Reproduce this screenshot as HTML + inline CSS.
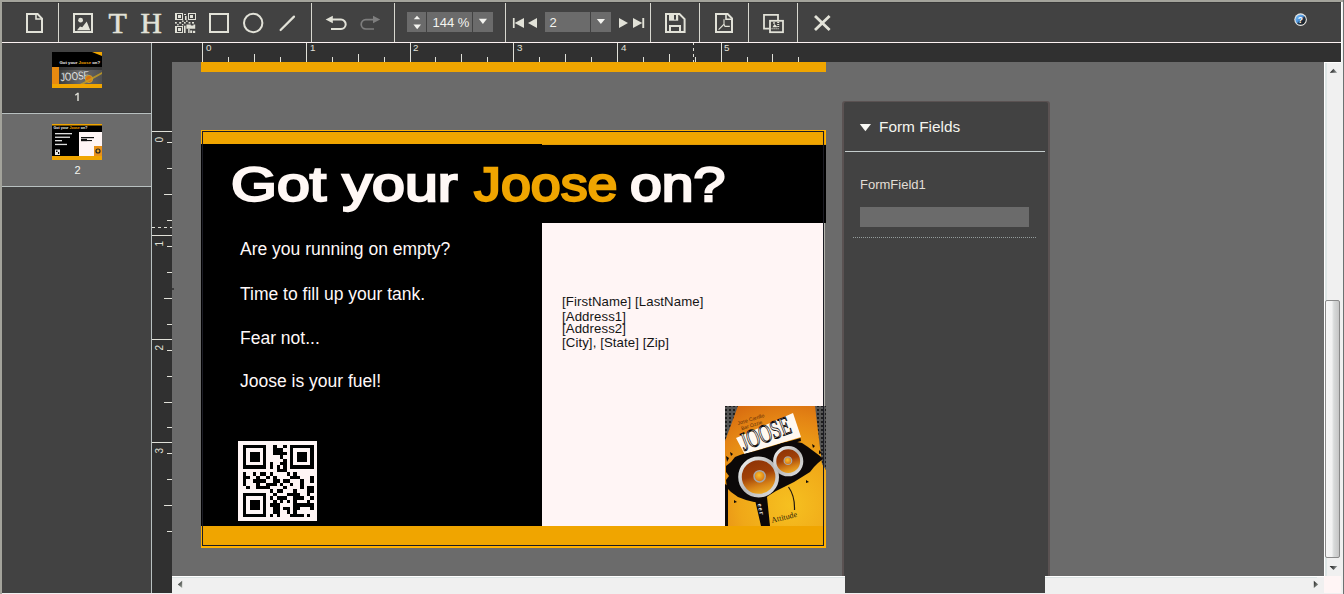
<!DOCTYPE html>
<html><head><meta charset="utf-8">
<style>
*{margin:0;padding:0;box-sizing:border-box}
html,body{width:1344px;height:594px;overflow:hidden;background:#a3a39b;font-family:"Liberation Sans",sans-serif}
.a{position:absolute}
#tb{left:2px;top:2px;width:1339px;height:41px;background:#424242;border-top:1px solid #383838}
.sep{position:absolute;top:3px;width:1px;height:39px;background:#d8d8d0}
.sepd{position:absolute;top:3px;width:1px;height:39px;background:#3a3a3a}
#hl{left:2px;top:42px;width:1339px;height:1px;background:#fcf2f2}
#side{left:2px;top:43px;width:149px;height:550px;background:#424242}
#sidel{left:151px;top:43px;width:1px;height:550px;background:#b8c0c0}
#rul{left:152px;top:43px;width:1189px;height:19px;background:#303030}
#vrul{left:152px;top:62px;width:20px;height:531px;background:#303030}
#canvas{left:172px;top:62px;width:1152px;height:514px;background:#6b6b6b}
#vsb{left:1324px;top:62px;width:19px;height:514px;background:#f0f0f0;border-left:1px solid #fff}
#hsb{left:172px;top:576px;width:1152px;height:18px;background:#f0f0f0;border-top:1px solid #fff}
#corner{left:1324px;top:576px;width:17px;height:17px;background:#fff5f5}
#rb{left:1343px;top:0;width:1px;height:594px;background:#6c7272}
#bot{left:2px;top:593px;width:1341px;height:1px;background:#f0f0f0}
.ico{position:absolute;overflow:visible}
</style></head><body>
<div id="tb" class="a"></div>
<div class="sep" style="left:58px"></div>
<div class="sep" style="left:311px"></div>
<div class="sep" style="left:394px"></div>
<div class="sep" style="left:505px"></div>
<div class="sep" style="left:650px"></div>
<div class="sep" style="left:699px"></div>
<div class="sep" style="left:748px"></div>
<div class="sep" style="left:797px"></div>
<div id="hl" class="a"></div>
<svg class="a" style="left:0;top:0" width="1344" height="43" viewBox="0 0 1344 43">
<g fill="none" stroke="#e2e2d8" stroke-width="2">
<path d="M27,14 H37.6 L42,18.6 V32 H27 Z"/>
<path d="M36,14 V19 H42" stroke-width="1.6"/>
<rect x="74" y="14" width="18" height="18"/>
<rect x="210" y="14" width="18" height="18"/>
<circle cx="253.2" cy="23" r="9.2"/>
<path d="M280.6,30 L294,16.6" stroke-width="2.2" stroke-linecap="round"/>
<path d="M332,19.6 H341 A4.7,4.7 0 0 1 341,29 H331"/>
<path d="M666,14 H679.5 L684.6,19.1 V32 H666 Z"/>
<path d="M670,33 V26 H680 V33"/>
<path d="M716,14 H727.6 L732,18.4 V32 H716 Z"/>
<path d="M726,14 V19.2 H732" stroke-width="1.6"/>
<path d="M769.5,28.6 H764 V14.8 H778 V20" stroke-width="1.8"/>
<rect x="770" y="20.8" width="13" height="11.4" stroke-width="1.8"/>
<path d="M815,16 L829.6,30 M829.6,16 L815,30" stroke-width="2.8"/>
</g>
<g fill="#e2e2d8">
<circle cx="80.6" cy="20.2" r="2.4"/>
<path d="M77,30.2 L80,26.4 L82.2,27.2 L86.7,21.6 L90.2,30.2 Z"/>
<text x="108.6" y="33" font-family="Liberation Serif" font-size="30" stroke="#e2e2d8" stroke-width="0.6">T</text>
<text x="140.6" y="33" font-family="Liberation Serif" font-size="29.5" stroke="#e2e2d8" stroke-width="0.6">H</text>
<path d="M325.6,19.6 L332.8,15.8 L332.8,23.2 Z"/>
<rect x="669" y="15" width="9.2" height="5.7"/>
</g>
<path d="M670,26.6 L670,26.6" />
<rect x="674" y="15" width="2" height="4.6" fill="#424242"/>
<g fill="none" stroke="#e2e2d8" stroke-width="1.1">
<path d="M718.6,29.6 L724,24.2 V19.2 M724,24.2 L725,26.4 H729.8"/>
<path d="M771.5,28.7 H779" stroke-dasharray="1.2,0.8"/>
</g>
<g fill="#e2e2d8">
<path d="M772.5,27.2 L774.5,24 L776,25.5 L777.5,27.2 Z"/>
<circle cx="774" cy="23" r="0.9"/>
<rect x="777.2" y="22" width="2" height="1"/>
<rect x="777.2" y="24" width="2" height="1"/>
<rect x="777.2" y="26" width="2" height="1"/>
</g>
<g fill="none" stroke="#7e7e7e" stroke-width="1.7">
<path d="M373,19.6 H365.8 A4.6,4.7 0 0 0 365.8,29 H374"/>
</g>
<path d="M380.2,19.6 L373,15.8 L373,23.2 Z" fill="#7e7e7e"/>
<!-- qr icon -->
<g fill="#e2e2d8">
<path fill-rule="evenodd" d="M175,13 h8 v7 h-8 Z M177,14 v5 h5 v-5 Z"/>
<rect x="178" y="15" width="3" height="3"/>
<path fill-rule="evenodd" d="M188,13 h8 v7 h-8 Z M189,14 v5 h6 v-5 Z"/>
<rect x="190" y="15" width="3" height="3"/>
<path fill-rule="evenodd" d="M175,26 h8 v7 h-8 Z M177,27 v5 h5 v-5 Z"/>
<rect x="178" y="28" width="3" height="3"/>
<rect x="184" y="14" width="2" height="1"/>
<rect x="185" y="16" width="1.6" height="4"/>
<rect x="182" y="20.5" width="1.6" height="1.4"/>
<rect x="186" y="20.5" width="1.6" height="1.4"/>
<rect x="175" y="22" width="1.8" height="1.6"/>
<rect x="179.2" y="22" width="2" height="1.6"/>
<rect x="184" y="22" width="1.6" height="1.6"/>
<rect x="188.6" y="22" width="1.8" height="1.6"/>
<rect x="192" y="22" width="2" height="1.6"/>
<rect x="177.2" y="24" width="1.4" height="1.4"/>
<rect x="182" y="24" width="1.4" height="1.4"/>
<path d="M186.4,24.4 H190.8 V25.6 H193.4 V24.4 H195.2 V28.8 H186.4 Z"/>
<rect x="184" y="25.7" width="1.6" height="7.3"/>
<rect x="188.2" y="28.8" width="1.4" height="4.2"/>
<rect x="190.2" y="30.4" width="2" height="2.6"/>
<rect x="193" y="30.8" width="2.2" height="2.2"/>
</g>
<!-- zoom control -->
<rect x="407" y="12" width="19" height="20" fill="#6b6b6b"/>
<rect x="427" y="12" width="45" height="20" fill="#6b6b6b"/>
<rect x="473" y="12" width="20" height="20" fill="#6b6b6b"/>
<g fill="#f4f4f0">
<path d="M413.8,19.2 L417,15.8 L420.2,19.2 Z"/>
<path d="M413.4,24.6 L421,24.6 L417.2,29.2 Z"/>
<path d="M478.8,18.8 L487,18.8 L482.9,24 Z"/>
</g>
<text x="432.5" y="27.2" font-size="13" fill="#f4f4f0">144 %</text>
<!-- page nav -->
<g fill="#e2e2d8">
<rect x="512.9" y="18" width="1.7" height="10"/>
<path d="M514.6,23 L524,18 L524,28 Z"/>
<path d="M528,23 L537,18 L537,28 Z"/>
<path d="M619,18 L628,23 L619,28 Z"/>
<path d="M633,18 L642.3,23 L633,28 Z"/>
<rect x="642.3" y="18" width="1.9" height="10"/>
</g>
<rect x="545" y="12" width="45" height="20" fill="#6b6b6b"/>
<rect x="591" y="12" width="20" height="20" fill="#6b6b6b"/>
<text x="549.6" y="27.3" font-size="13" fill="#f4f4f0">2</text>
<path d="M596.8,19 L605,19 L600.9,24 Z" fill="#f4f4f0"/>
<!-- help -->
<defs><linearGradient id="hg" x1="0.15" y1="0.15" x2="0.85" y2="0.85"><stop offset="0" stop-color="#70b4f4"/><stop offset="0.45" stop-color="#4a90d8"/><stop offset="0.6" stop-color="#203448"/><stop offset="1" stop-color="#181c20"/></linearGradient></defs>
<circle cx="1300.6" cy="19.6" r="6.3" fill="#e8e8e4"/>
<circle cx="1300.6" cy="19.6" r="5.2" fill="url(#hg)"/>
<text x="1297.7" y="23.2" font-family="Liberation Sans" font-size="8.5" font-weight="bold" fill="#fff">?</text>
</svg>

<div id="side" class="a"></div>
<div class="a" style="left:2px;top:112px;width:149px;height:1px;background:#3a3a3a"></div>
<div class="a" style="left:2px;top:113px;width:149px;height:1px;background:#b8c0c0"></div>
<div class="a" style="left:2px;top:114px;width:149px;height:72px;background:#6b6b6b"></div>
<div class="a" style="left:2px;top:186px;width:149px;height:1px;background:#b8c0c0"></div>
<!--THUMBS-->
<svg class="a" style="left:0;top:0" width="152" height="200" viewBox="0 0 152 200">
<defs><linearGradient id="tph" x1="0" x2="1"><stop offset="0" stop-color="#3a3a3a"/><stop offset="0.5" stop-color="#6a6a6a"/><stop offset="1" stop-color="#505050"/></linearGradient></defs>
<rect x="52" y="52" width="50" height="36" fill="#000"/>
<path d="M92,52 L102,52 L102,56 Z" fill="#f0a500"/>
<rect x="52" y="67" width="7" height="17" fill="#e88a10"/>
<rect x="59" y="67" width="43" height="17" fill="url(#tph)"/>
<rect x="59" y="67" width="43" height="3" fill="#2a2a2a" opacity="0.6"/>
<rect x="52" y="84" width="50" height="4" fill="#f0a500"/>
<text x="59.5" y="64" font-family="Liberation Sans" font-weight="bold" font-size="4.3" fill="#f0f0f0">Got your <tspan fill="#f0a500">Joose</tspan> on?</text>
<text x="0" y="0" font-family="Liberation Sans" font-size="10.5" font-weight="bold" fill="#ececec" stroke="#222" stroke-width="0.3" transform="translate(60.5,81.5) rotate(-5) scale(0.85,1.15)" letter-spacing="-0.4">JOOSE</text>
<circle cx="89" cy="79" r="3.6" fill="#d87010" stroke="#c8a030" stroke-width="1"/>
<path d="M80,84 L102,72 L102,74 L84,84 Z" fill="#c8a020" opacity="0.8"/>
<rect x="52" y="124" width="50" height="36" fill="#000"/>
<rect x="52" y="124" width="50" height="1.5" fill="#f0a500"/>
<rect x="79" y="132" width="23" height="24" fill="#fff5f5"/>
<rect x="52" y="156" width="50" height="4" fill="#f0a500"/>
<text x="53.5" y="129.3" font-family="Liberation Sans" font-weight="bold" font-size="3.6" fill="#f0f0f0">Got your <tspan fill="#f0a500">Joose</tspan> on?</text>
<rect x="55" y="133" width="17" height="1.3" fill="#e0e0e0"/>
<rect x="55" y="136.6" width="15" height="1.3" fill="#e0e0e0"/>
<rect x="55" y="140" width="7" height="1.3" fill="#e0e0e0"/>
<rect x="55" y="143.8" width="12" height="1.3" fill="#e0e0e0"/>
<rect x="55" y="149.5" width="5" height="5.5" fill="#e8e8e8"/>
<rect x="56" y="150.5" width="1.5" height="1.5" fill="#000"/>
<rect x="58" y="152" width="1.2" height="2" fill="#000"/>
<rect x="81" y="137" width="13" height="1.2" fill="#111"/>
<rect x="81" y="138.8" width="6" height="2.4" fill="#111"/>
<rect x="87" y="140" width="5" height="1.1" fill="#111"/>
<rect x="94" y="146" width="8" height="10" fill="#e89018"/>
<circle cx="98" cy="151" r="2.6" fill="#222"/>
<circle cx="98" cy="151" r="1.4" fill="#e8a020"/>
</svg>
<svg class="a" style="left:0;top:0" width="152" height="200"><path d="M78,92.8 V101" stroke="#e4e4dc" stroke-width="1.4"/><path d="M75.3,95.3 L77.9,93.2" stroke="#e4e4dc" stroke-width="1.3"/></svg>
<div class="a" style="left:52.5px;top:163.4px;width:50px;text-align:center;font-size:11px;line-height:14px;color:#f4f4f0">2</div>
<!--/THUMBS-->
<div id="sidel" class="a"></div>
<div id="rul" class="a"></div>
<div id="vrul" class="a"></div>
<div id="canvas" class="a"></div>
<!--PAGE-->
<div class="a" style="left:201px;top:62px;width:625px;height:10px;background:#f0a500"></div>
<div id="page" class="a" style="left:201px;top:130px;width:625px;height:418px;background:#000;overflow:hidden">
 <div class="a" style="left:0;top:0;width:625px;height:14px;background:#f0a500"></div>
 <div class="a" style="left:341px;top:14px;width:284px;height:1px;background:#e09a04"></div>
 <div class="a" style="left:0;top:396px;width:625px;height:22px;background:#f0a500"></div>
 <div class="a" style="left:341px;top:93px;width:282px;height:303px;background:#fff5f5"></div>
 <div class="a" style="left:623px;top:93px;width:2px;height:303px;background:#6b6b6b"></div>
 <div class="a" style="left:623px;top:93px;width:1px;height:303px;background:#b4b4ac"></div>
 <div class="a" style="left:0;top:0;width:625px;height:1px;background:#ffb000"></div>
 <div class="a" style="left:0;top:0;width:1px;height:14px;background:#ffb000"></div>
 <div class="a" style="left:624px;top:0;width:2px;height:14px;background:#ffb000"></div>
 <div class="a" style="left:0;top:396px;width:1px;height:22px;background:#ffb000"></div>
 <div class="a" style="left:623px;top:396px;width:2px;height:22px;background:#ffb000"></div>
 <div class="a" style="left:0;top:416px;width:625px;height:2px;background:#ffb000"></div>
 <div class="a" style="left:30px;top:25px;font-size:48px;-webkit-text-stroke:2.3px #fff8f5;line-height:60px;color:#fff8f5;white-space:pre;transform:scaleX(1.23);transform-origin:0 0">Got your</div>
 <div class="a" style="left:273px;top:25px;font-size:48px;-webkit-text-stroke:2.3px #f0a500;line-height:60px;color:#f0a500;white-space:pre;transform:scaleX(1.12);transform-origin:0 0">Joose</div>
 <div class="a" style="left:429px;top:25px;font-size:48px;-webkit-text-stroke:2.3px #fff8f5;line-height:60px;color:#fff8f5;white-space:pre;transform:scaleX(1.19);transform-origin:0 0">on?</div>
 <div class="a" style="left:39px;top:109px;font-size:17.5px;line-height:20px;color:#fff8f8;white-space:pre">Are you running on empty?</div>
 <div class="a" style="left:39px;top:154px;font-size:17.5px;line-height:20px;color:#fff8f8;white-space:pre">Time to fill up your tank.</div>
 <div class="a" style="left:39px;top:198px;font-size:17.5px;line-height:20px;color:#fff8f8;white-space:pre">Fear not...</div>
 <div class="a" style="left:39px;top:241px;font-size:17.5px;line-height:20px;color:#fff8f8;white-space:pre">Joose is your fuel!</div>
 <div class="a" style="left:361px;top:164px;font-size:13.2px;line-height:15px;color:#141414;white-space:pre;letter-spacing:0.1px">[FirstName] [LastName]</div>
 <div class="a" style="left:361px;top:179px;font-size:13.2px;line-height:15px;color:#141414;white-space:pre;letter-spacing:0.1px">[Address1]</div>
 <div class="a" style="left:361px;top:191px;font-size:13.2px;line-height:15px;color:#141414;white-space:pre;letter-spacing:0.1px">[Address2]</div>
 <div class="a" style="left:361px;top:205px;font-size:13.2px;line-height:15px;color:#141414;white-space:pre;letter-spacing:0.1px">[City], [State] [Zip]</div>
 <div class="a" style="left:37px;top:311px;width:79px;height:80px;background:#fff5f5"></div>
 <!--QR-->
 <!--JOOSEIMG-->
 <div class="a" style="left:1px;top:1px;width:622px;height:415px;border:1px solid #1c1c24"></div>
</div>
<!--QRSVG--><svg class="a" style="left:0;top:0" width="1344" height="594" viewBox="0 0 1344 594"><g fill="#000"><rect x="243" y="445" width="23" height="3"/><rect x="273" y="445" width="4" height="3"/><rect x="283" y="445" width="4" height="3"/><rect x="290" y="445" width="24" height="3"/><rect x="243" y="448" width="3" height="4"/><rect x="263" y="448" width="3" height="4"/><rect x="273" y="448" width="10" height="4"/><rect x="290" y="448" width="3" height="4"/><rect x="310" y="448" width="4" height="4"/><rect x="243" y="452" width="3" height="3"/><rect x="250" y="452" width="10" height="3"/><rect x="263" y="452" width="3" height="3"/><rect x="273" y="452" width="14" height="3"/><rect x="290" y="452" width="3" height="3"/><rect x="297" y="452" width="10" height="3"/><rect x="310" y="452" width="4" height="3"/><rect x="243" y="455" width="3" height="4"/><rect x="250" y="455" width="10" height="4"/><rect x="263" y="455" width="3" height="4"/><rect x="280" y="455" width="3" height="4"/><rect x="290" y="455" width="3" height="4"/><rect x="297" y="455" width="10" height="4"/><rect x="310" y="455" width="4" height="4"/><rect x="243" y="459" width="3" height="3"/><rect x="250" y="459" width="10" height="3"/><rect x="263" y="459" width="3" height="3"/><rect x="283" y="459" width="4" height="3"/><rect x="290" y="459" width="3" height="3"/><rect x="297" y="459" width="10" height="3"/><rect x="310" y="459" width="4" height="3"/><rect x="243" y="462" width="3" height="3"/><rect x="263" y="462" width="3" height="3"/><rect x="270" y="462" width="3" height="3"/><rect x="280" y="462" width="7" height="3"/><rect x="290" y="462" width="3" height="3"/><rect x="310" y="462" width="4" height="3"/><rect x="243" y="465" width="23" height="4"/><rect x="270" y="465" width="3" height="4"/><rect x="277" y="465" width="3" height="4"/><rect x="283" y="465" width="4" height="4"/><rect x="290" y="465" width="24" height="4"/><rect x="277" y="469" width="10" height="3"/><rect x="243" y="472" width="3" height="4"/><rect x="253" y="472" width="3" height="4"/><rect x="260" y="472" width="6" height="4"/><rect x="270" y="472" width="3" height="4"/><rect x="287" y="472" width="3" height="4"/><rect x="293" y="472" width="4" height="4"/><rect x="243" y="476" width="7" height="3"/><rect x="256" y="476" width="4" height="3"/><rect x="266" y="476" width="4" height="3"/><rect x="273" y="476" width="4" height="3"/><rect x="290" y="476" width="10" height="3"/><rect x="310" y="476" width="4" height="3"/><rect x="243" y="479" width="3" height="4"/><rect x="253" y="479" width="13" height="4"/><rect x="273" y="479" width="7" height="4"/><rect x="283" y="479" width="7" height="4"/><rect x="300" y="479" width="4" height="4"/><rect x="310" y="479" width="4" height="4"/><rect x="243" y="483" width="3" height="3"/><rect x="256" y="483" width="4" height="3"/><rect x="266" y="483" width="11" height="3"/><rect x="280" y="483" width="3" height="3"/><rect x="290" y="483" width="3" height="3"/><rect x="300" y="483" width="4" height="3"/><rect x="246" y="486" width="4" height="3"/><rect x="256" y="486" width="14" height="3"/><rect x="283" y="486" width="4" height="3"/><rect x="300" y="486" width="4" height="3"/><rect x="307" y="486" width="7" height="3"/><rect x="270" y="489" width="3" height="4"/><rect x="277" y="489" width="6" height="4"/><rect x="293" y="489" width="4" height="4"/><rect x="307" y="489" width="7" height="4"/><rect x="243" y="493" width="23" height="3"/><rect x="273" y="493" width="4" height="3"/><rect x="287" y="493" width="13" height="3"/><rect x="307" y="493" width="3" height="3"/><rect x="243" y="496" width="3" height="4"/><rect x="263" y="496" width="3" height="4"/><rect x="270" y="496" width="3" height="4"/><rect x="277" y="496" width="10" height="4"/><rect x="293" y="496" width="11" height="4"/><rect x="310" y="496" width="4" height="4"/><rect x="243" y="500" width="3" height="3"/><rect x="250" y="500" width="10" height="3"/><rect x="263" y="500" width="3" height="3"/><rect x="273" y="500" width="4" height="3"/><rect x="280" y="500" width="3" height="3"/><rect x="287" y="500" width="3" height="3"/><rect x="293" y="500" width="4" height="3"/><rect x="307" y="500" width="3" height="3"/><rect x="243" y="503" width="3" height="4"/><rect x="250" y="503" width="10" height="4"/><rect x="263" y="503" width="3" height="4"/><rect x="270" y="503" width="10" height="4"/><rect x="293" y="503" width="21" height="4"/><rect x="243" y="507" width="3" height="3"/><rect x="250" y="507" width="10" height="3"/><rect x="263" y="507" width="3" height="3"/><rect x="273" y="507" width="7" height="3"/><rect x="283" y="507" width="7" height="3"/><rect x="293" y="507" width="7" height="3"/><rect x="310" y="507" width="4" height="3"/><rect x="243" y="510" width="3" height="4"/><rect x="263" y="510" width="3" height="4"/><rect x="273" y="510" width="7" height="4"/><rect x="287" y="510" width="3" height="4"/><rect x="293" y="510" width="4" height="4"/><rect x="243" y="514" width="23" height="3"/><rect x="270" y="514" width="3" height="3"/><rect x="277" y="514" width="3" height="3"/><rect x="290" y="514" width="14" height="3"/><rect x="307" y="514" width="3" height="3"/></g></svg><!--/QRSVG-->
<!--JOOSE-->
<svg class="a" style="left:0;top:0" width="1344" height="594" viewBox="0 0 1344 594">
<defs>
<clipPath id="jc"><rect x="725" y="406" width="101" height="120"/></clipPath>
<radialGradient id="jbg" cx="790" cy="505" r="110" gradientUnits="userSpaceOnUse">
<stop offset="0" stop-color="#f6c020"/><stop offset="0.45" stop-color="#f0a818"/><stop offset="0.8" stop-color="#e48414"/><stop offset="1" stop-color="#d86c10"/></radialGradient>
<pattern id="dots" width="4" height="4" patternUnits="userSpaceOnUse"><rect width="4" height="4" fill="#555"/><circle cx="2" cy="2" r="1.1" fill="#111"/></pattern>
<linearGradient id="cone" x1="0.3" y1="0" x2="0.6" y2="1"><stop offset="0" stop-color="#8c3206"/><stop offset="0.45" stop-color="#a04008"/><stop offset="0.75" stop-color="#d88418"/><stop offset="1" stop-color="#f0b428"/></linearGradient>
<linearGradient id="ring" x1="0" y1="0" x2="1" y2="1"><stop offset="0" stop-color="#f4f4f4"/><stop offset="0.5" stop-color="#b8b8b8"/><stop offset="1" stop-color="#e0e0e0"/></linearGradient>
<radialGradient id="cap" cx="0.45" cy="0.4" r="0.6"><stop offset="0" stop-color="#f8c030"/><stop offset="1" stop-color="#d87010"/></radialGradient>
</defs>
<g clip-path="url(#jc)">
<rect x="725" y="406" width="101" height="120" fill="url(#jbg)"/>
<path d="M725,406 L738,406 L725,441 Z" fill="url(#dots)"/>
<path d="M815,406 L826,406 L826,470 L822,464 Z" fill="url(#dots)"/>
<path d="M726,466 L731,462 L735,457 L740,455 L746,453 L756,452 L766,450 L774,446 L782,443 L792,441 L802,443 L808,447 L812,450 L816,453 L820,456 L823,459 L818,463 L814,467 L810,472 L802,477 L794,482 L786,486 L776,491 L768,496 L762,502 L754,502 L746,500 L738,497 L731,492 L727,488 L726,480 L729,476 L726,472 Z" fill="#0c0808"/>
<path d="M726,456 L729,458 L727,462 Z M730,452 L733,454 L731,456 Z M812,444 L815,446 L813,448 Z M819,450 L822,453 L819,454 Z M734,500 L737,502 L734,503 Z M806,480 L809,482 L806,483 Z" fill="#0c0808"/>
<path d="M755,500 L767,497 L770,526 L761,526 Z" fill="#0c0808"/>
<path d="M725,484 L728,486 L728,526 L725,526 Z" fill="#0c0808"/>
<path d="M788.5,487 Q795,496 794.5,510" stroke="#201810" stroke-width="1.2" fill="none"/>
<circle cx="758.6" cy="477" r="18.6" fill="url(#cone)" stroke="url(#ring)" stroke-width="3.6"/>
<circle cx="759.6" cy="476.3" r="5.6" fill="url(#cap)" stroke="#a8a8a8" stroke-width="1.5"/>
<circle cx="788.2" cy="461.2" r="13.5" fill="url(#cone)" stroke="url(#ring)" stroke-width="3.2"/>
<circle cx="787.9" cy="460.7" r="3.8" fill="url(#cap)" stroke="#a8a8a8" stroke-width="1.2"/>
<path d="M736,438 L744.5,454 L801,437 L793,413 Z" fill="#fff8f0"/>
<path d="M744.5,454 L800.5,438 L801,441 L746,457 Z" fill="#0c0808"/>
<text x="0" y="0" transform="translate(744,451) rotate(-21) scale(0.7,1.05)" font-family="Liberation Serif" font-size="25" fill="#fff8f0" stroke="#0c0808" stroke-width="0.9">JOOSE</text>
<g transform="translate(738,425) rotate(-17)" fill="#5a2a08" font-family="Liberation Sans" font-size="5">
<text x="0" y="0">Jose Carrillo</text><text x="2" y="6">Bar Ozzie</text>
</g>
<text x="0" y="0" transform="translate(772,523) rotate(-14)" font-family="Liberation Serif" font-size="8" fill="#2a1a08">Attitude</text>
<text x="0" y="0" transform="translate(757.5,504) rotate(78)" font-family="Liberation Serif" font-weight="bold" font-size="7" fill="#e8e8e8" letter-spacing="1">eer</text>
</g>
</svg>
<!--/JOOSE-->
<div class="a" style="left:823px;top:406px;width:1px;height:140px;background:#1c1c24"></div>
<!--/PAGE-->
<!--RULERS-->
<svg class="a" style="left:0;top:0" width="1344" height="594" viewBox="0 0 1344 594">
<g fill="#e0e0d8">
<rect x="202" y="43" width="1" height="19"/>
<rect x="306" y="43" width="1" height="19"/>
<rect x="410" y="43" width="1" height="19"/>
<rect x="513" y="43" width="1" height="19"/>
<rect x="617" y="43" width="1" height="19"/>
<rect x="721" y="43" width="1" height="19"/>
<rect x="228" y="57" width="1" height="5"/>
<rect x="254" y="54" width="1" height="8"/>
<rect x="280" y="57" width="1" height="5"/>
<rect x="332" y="57" width="1" height="5"/>
<rect x="358" y="54" width="1" height="8"/>
<rect x="384" y="57" width="1" height="5"/>
<rect x="435" y="57" width="1" height="5"/>
<rect x="461" y="54" width="1" height="8"/>
<rect x="487" y="57" width="1" height="5"/>
<rect x="539" y="57" width="1" height="5"/>
<rect x="565" y="54" width="1" height="8"/>
<rect x="591" y="57" width="1" height="5"/>
<rect x="643" y="57" width="1" height="5"/>
<rect x="669" y="54" width="1" height="8"/>
<rect x="695" y="57" width="1" height="5"/>
<rect x="747" y="57" width="1" height="5"/>
<rect x="772" y="54" width="1" height="8"/>
<rect x="798" y="57" width="1" height="5"/>
<rect x="693" y="43" width="1" height="2"/>
<rect x="693" y="48" width="1" height="3"/>
<rect x="693" y="54" width="1" height="3"/>
<rect x="693" y="60" width="1" height="2"/>
<rect x="152" y="131" width="20" height="1"/>
<rect x="152" y="235" width="20" height="1"/>
<rect x="152" y="339" width="20" height="1"/>
<rect x="152" y="442" width="20" height="1"/>
<rect x="167" y="142" width="5" height="1"/>
<rect x="167" y="168" width="5" height="1"/>
<rect x="164" y="194" width="8" height="1"/>
<rect x="167" y="220" width="5" height="1"/>
<rect x="167" y="246" width="5" height="1"/>
<rect x="167" y="272" width="5" height="1"/>
<rect x="164" y="298" width="8" height="1"/>
<rect x="167" y="324" width="5" height="1"/>
<rect x="167" y="350" width="5" height="1"/>
<rect x="167" y="376" width="5" height="1"/>
<rect x="164" y="402" width="8" height="1"/>
<rect x="167" y="427" width="5" height="1"/>
<rect x="167" y="453" width="5" height="1"/>
<rect x="167" y="479" width="5" height="1"/>
<rect x="164" y="505" width="8" height="1"/>
<rect x="167" y="531" width="5" height="1"/>
<rect x="152" y="227" width="3" height="1"/>
<rect x="158" y="227" width="3" height="1"/>
<rect x="164" y="227" width="3" height="1"/>
<rect x="170" y="227" width="2" height="1"/>
</g>
<g fill="#e0e0d8" font-size="10" font-family="Liberation Sans">
<text x="206" y="51.4" font-size="9.8">0</text>
<text x="310" y="51.4" font-size="9.8">1</text>
<text x="413" y="51.4" font-size="9.8">2</text>
<text x="517" y="51.4" font-size="9.8">3</text>
<text x="621" y="51.4" font-size="9.8">4</text>
<text x="724" y="51.4" font-size="9.8">5</text>
<text transform="translate(162.5,137) rotate(-90)" x="-5.6" y="0">0</text>
<text transform="translate(162.5,241) rotate(-90)" x="-5.6" y="0">1</text>
<text transform="translate(162.5,345) rotate(-90)" x="-5.6" y="0">2</text>
<text transform="translate(162.5,448) rotate(-90)" x="-5.6" y="0">3</text>
</g>
</svg>
<!--/RULERS-->
<div class="a" style="left:172px;top:288px;width:2px;height:2px;background:#3a3a3a"></div>
<!--PANEL-->
<div class="a" style="left:842px;top:101px;width:208px;height:475px;background:#5a5252;border-radius:3px 3px 0 0"></div>
<div class="a" style="left:844px;top:102px;width:204px;height:491px;background:#424242;border-radius:2px 2px 0 0"></div>
<div class="a" style="left:845px;top:151px;width:200px;height:1px;background:#c4cccc"></div>
<svg class="a" style="left:0;top:0" width="1344" height="594" viewBox="0 0 1344 594">
<path d="M859.8,124 L871,124 L865.4,131.2 Z" fill="#f8f8f4"/>
<text x="879" y="131.8" font-family="Liberation Sans" font-size="15.4" fill="#f4f4ee">Form Fields</text>
<text x="860" y="189.2" font-family="Liberation Sans" font-size="13" fill="#e2ded6">FormField1</text>
<rect x="860" y="207" width="169" height="20" fill="#6b6b6b"/>
<line x1="853" y1="237.5" x2="1037" y2="237.5" stroke="#949c9c" stroke-width="1" stroke-dasharray="1,1"/>
</svg>
<!--/PANEL-->
<div class="a" style="left:1324px;top:62px;width:20px;height:532px;background:#f0f0f0"></div>
<div class="a" style="left:1324px;top:62px;width:1px;height:514px;background:#fff"></div>
<div class="a" style="left:1324px;top:62px;width:19px;height:1px;background:#fff"></div>
<div class="a" style="left:1325px;top:63px;width:2px;height:513px;background:#dde5e5"></div>
<div class="a" style="left:1325px;top:300px;width:15px;height:258px;border:1px solid #8a8a8a;border-radius:2px;background:linear-gradient(90deg,#f6f6f6 0%,#f2f2f2 45%,#d8dada 60%,#c6c6c6 100%)"></div>

<div id="hsb" class="a" style="width:673px"></div>

<div class="a" style="left:1045px;top:576px;width:279px;height:17px;background:#f0f0f0;border-top:1px solid #fff"></div>
<div class="a" style="left:845px;top:576px;width:200px;height:17px;background:#424242"></div>
<div class="a" style="left:172px;top:577px;width:673px;height:1px;background:#dce4e4"></div>
<div class="a" style="left:1045px;top:577px;width:272px;height:1px;background:#dce4e4"></div>
<div id="corner" class="a"></div>
<svg class="a" style="left:0;top:0" width="1344" height="594" viewBox="0 0 1344 594">
<defs><linearGradient id="ag" x1="0" x2="1" y1="0" y2="0"><stop offset="0" stop-color="#101010"/><stop offset="1" stop-color="#9aa0a0"/></linearGradient>
<linearGradient id="ag2" x1="0" x2="1" y1="0" y2="1"><stop offset="0" stop-color="#202020"/><stop offset="1" stop-color="#a0a8a0"/></linearGradient></defs>
<path d="M1329.8,72.8 L1333.5,68.8 L1337.2,72.8 Z" fill="url(#ag)"/>
<path d="M1329.6,566 L1337.4,566 L1333.5,570 Z" fill="url(#ag)"/>
<path d="M1313.8,580.8 L1318.2,584.4 L1313.8,588 Z" fill="url(#ag2)"/>
<path d="M182.2,580.8 L177.8,584.4 L182.2,588 Z" fill="url(#ag2)"/>
</svg>
<div id="bot" class="a"></div>
<div class="a" style="left:1341px;top:2px;width:2px;height:592px;background:#f0f0f0"></div>
<div class="a" style="left:1341px;top:2px;width:1px;height:60px;background:#fcfcfc"></div>
<div id="rb" class="a"></div>
</body></html>
